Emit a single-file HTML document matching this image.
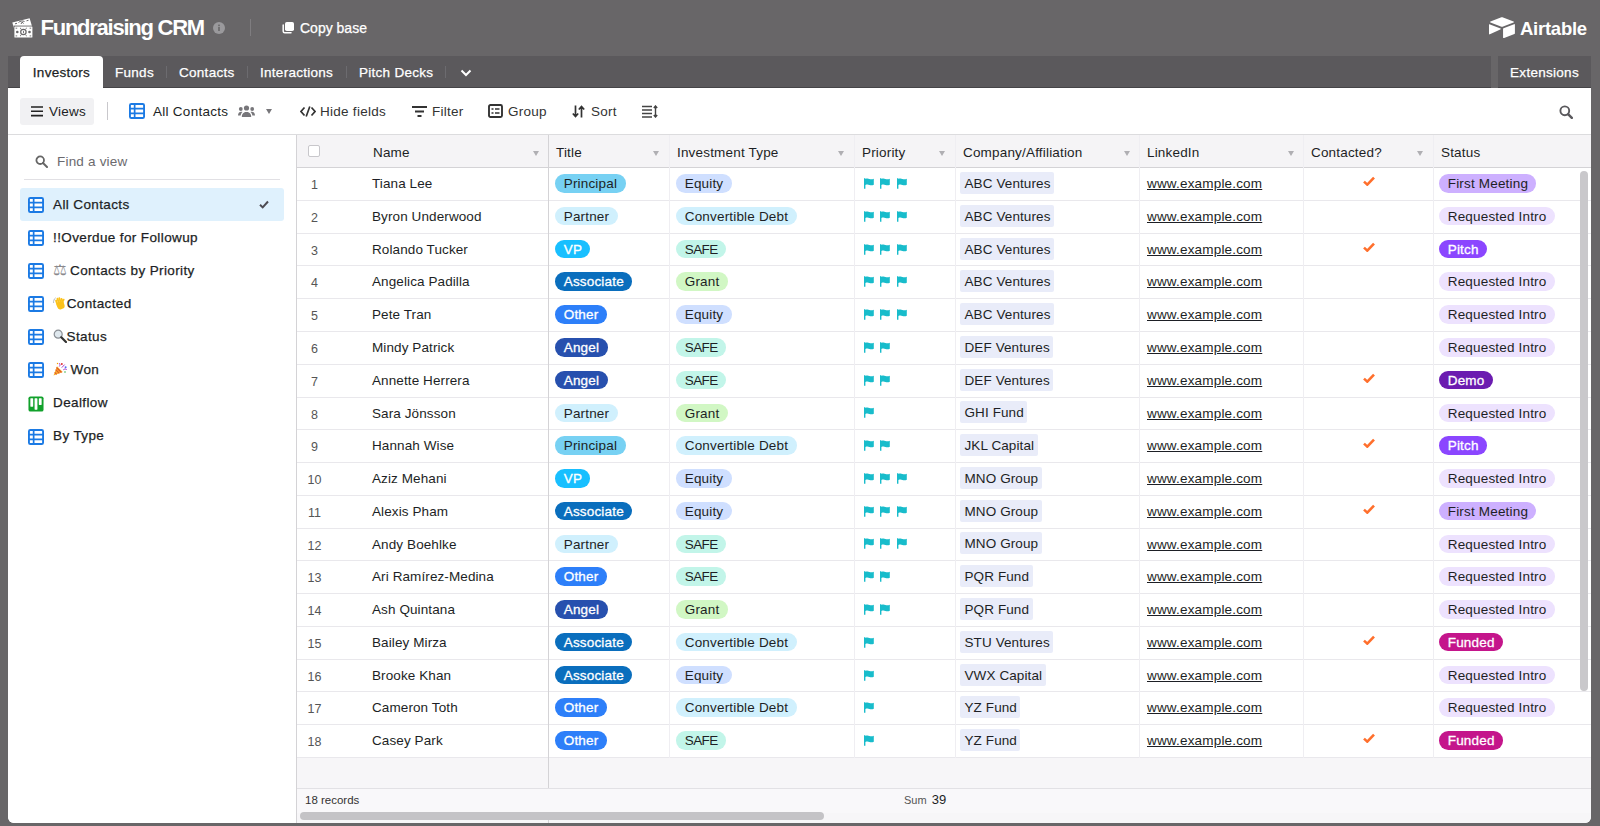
<!DOCTYPE html>
<html><head><meta charset="utf-8"><title>Fundraising CRM - Airtable</title>
<style>
*{box-sizing:border-box}
html,body{margin:0;padding:0}
body{width:1600px;height:826px;overflow:hidden;background:#686668;font-family:"Liberation Sans","DejaVu Sans",sans-serif;font-size:13px;color:#1d1f25;position:relative}
.abs{position:absolute}
#top{position:absolute;left:0;top:0;width:1600px;height:56px}
#title{position:absolute;left:40.5px;top:13.5px;font-size:22px;font-weight:bold;color:#fff;letter-spacing:-1.25px;line-height:28px;white-space:nowrap}
#copy{position:absolute;left:300px;top:18px;font-size:14px;color:#fff;line-height:20px;white-space:nowrap;-webkit-text-stroke:.25px #fff}
#logo-t{position:absolute;left:1520px;top:14.5px;font-size:18.5px;font-weight:bold;color:#fff;line-height:28px;letter-spacing:-0.25px;white-space:nowrap}
#tabs{position:absolute;left:8px;top:56px;width:1483px;height:32px;background:#5b595c;border-bottom:1px solid #454447}
#ext{position:absolute;left:1498px;top:56px;width:93px;height:32px;background:#5b595c;border-bottom:1px solid #454447;color:#fff;font-size:13.5px;line-height:34px;text-align:center;letter-spacing:.28px;-webkit-text-stroke:.25px #fff}
.tab{position:absolute;top:0;height:32px;line-height:33px;color:#fff;font-size:13.5px;letter-spacing:.28px;white-space:nowrap;-webkit-text-stroke:.25px currentColor}
.tab.act{background:#fff;color:#1d1f25;border-radius:4px 4px 0 0;left:12px;width:83px;text-align:center;height:33px}
.tsep{position:absolute;top:10px;width:1px;height:12px;background:#6c6b6f}
#panel{position:absolute;left:8px;top:88px;width:1583px;height:735px;background:#fff;border-radius:0 0 6px 6px;overflow:hidden}
#toolbar{position:absolute;left:0;top:0;width:1583px;height:47px;border-bottom:1px solid #dcdcde}
.tb{position:absolute;top:14px;line-height:20px;font-size:13.5px;letter-spacing:.27px;color:#333;white-space:nowrap}
#views{position:absolute;left:12px;top:10px;width:74px;height:27px;background:#f1f1f3;border-radius:3px}
#side{position:absolute;left:0;top:47px;width:288px;height:690px;background:#fff}
.sv{position:absolute;left:12px;width:264px;height:33px;line-height:33px;font-size:13.5px;letter-spacing:.38px;-webkit-text-stroke:.25px currentColor;color:#1d1f25;white-space:nowrap}
.sv .lb{position:absolute;left:33px;top:0}
.sv svg.gi{position:absolute;left:8px;top:9.200px}
.sv.act{background:#dff1fd;border-radius:3px}
#grid{position:absolute;left:288px;top:47px;width:1295px;height:690px;background:#f7f6f8;border-left:1px solid #d4d3d6}
#ghead{position:absolute;left:0;top:0;width:1295px;height:33px;background:#f5f4f6;border-bottom:1px solid #d4d3d6}
.h{position:absolute;top:0;height:32px;line-height:35px;font-size:13.5px;letter-spacing:.18px;color:#1d1f25;white-space:nowrap}
.harr{position:absolute;margin-left:.6px;top:15.5px;width:0;height:0;border-left:3.5px solid transparent;border-right:3.5px solid transparent;border-top:5px solid #b0afb3}
.vline{position:absolute;top:0;width:1px;background:#efeef2}
.row{position:absolute;left:289px;width:1294px;height:32.76px;border-bottom:1px solid #e9e8ec;background:#fff;white-space:nowrap}
.row span.num{position:absolute;left:0;width:35px;text-align:center;top:0;line-height:35px;font-size:12.5px;color:#555}
.row span.nm{position:absolute;left:75px;top:0;line-height:32px;font-size:13.5px;letter-spacing:.1px}
.c{position:absolute;top:0;height:32px;line-height:33px;font-size:13.5px;letter-spacing:.18px}
.c-title{left:259px}.c-inv{left:380px}.c-pri{left:567px}.c-comp{left:664px}.c-li{left:850px;line-height:32px}.c-ct{left:1066px}.c-st{left:1143px}
.pill{display:inline-block;height:18.5px;line-height:20.4px;border-radius:9.25px;padding:0 8.4px;font-size:13.5px;letter-spacing:.18px;vertical-align:middle;position:relative;top:-2.2px;left:-0.7px}
.chip{display:inline-block;height:22px;line-height:23px;border-radius:2px;padding:0 3.5px 0 4.5px;font-size:13.5px;letter-spacing:.1px;background:#e9ecf9;vertical-align:middle;position:relative;top:-2.5px;left:-1px}
.fl{margin-right:6.5px;vertical-align:middle;position:relative;top:-2px;left:-0.5px}
.ck{vertical-align:middle;position:relative;top:-4.5px}
svg.em{vertical-align:middle;position:relative;top:-1.5px;margin-right:1px}
.sc{font-family:'DejaVu Sans',sans-serif;font-size:15.5px;line-height:10px;color:#8a898d;margin-right:3.200px;-webkit-text-stroke:0;letter-spacing:0}
#foot{position:absolute;left:289px;top:700px;width:1294px;height:25px;background:#f9f8fa;border-top:1px solid #e2e1e5}
</style></head><body>
<div id="top">
 <svg class="abs" style="left:11.500px;top:17.500px" width="21" height="20" viewBox="0 0 21 20"><g><path d="M0.300 4.600L17.600 0.300L20.400 9.500L2.500 12z" fill="#fff"/><path d="M3 5.800l2-.5M6.500 4.500c1.500-1.500 4-2 6-1M14.500 2.800l2-.5M9 6l1.200-2 1.300 1.600" stroke="#686668" stroke-width="1" fill="none"/><rect x="1.600" y="7.600" width="19.400" height="12.400" fill="#686668"/><rect x="2.400" y="8.400" width="18" height="11.200" rx=".6" fill="#fff"/><circle cx="11.400" cy="14" r="3.300" fill="#686668"/><circle cx="11.400" cy="14" r="2.100" fill="#fff"/><rect x="11" y="12.800" width=".9" height="2.400" fill="#686668"/><circle cx="5.300" cy="14" r="1.300" fill="#686668"/><circle cx="17.500" cy="14" r="1.300" fill="#686668"/><path d="M3.600 10.200h1.600M17.600 10.200h1.600M3.600 17.900h1.600M17.600 17.900h1.600M8 10l1.200.8M14.800 10l-1.200.8M8 18l1.200-.8M14.800 18l-1.200-.8" stroke="#686668" stroke-width=".9"/></g></svg>
 <div id="title">Fundraising CRM</div>
 <svg class="abs" style="left:213px;top:21.700px" width="12" height="12" viewBox="0 0 12 12"><circle cx="6" cy="6" r="6" fill="#9a999c"/><rect x="5.200" y="5" width="1.6" height="4" fill="#686668"/><rect x="5.200" y="2.600" width="1.6" height="1.6" fill="#686668"/></svg>
 <div class="abs" style="left:250px;top:19px;width:1px;height:17px;background:#7f7d80"></div>
 <svg class="abs" style="left:281px;top:21px" width="14" height="14" viewBox="0 0 14 14"><rect x="4" y="1" width="9" height="9" rx="1.800" fill="#fff"/><path d="M2.200 4v6.300a1.500 1.500 0 0 0 1.500 1.500h6.300" fill="none" stroke="#fff" stroke-width="1.500" stroke-linecap="round"/></svg>
 <div id="copy">Copy base</div>
 <svg class="abs" style="left:1489.300px;top:16.600px" width="26" height="21.200" viewBox="0 0 27 22"><path d="M12.200 0.500 L1.500 4.700 c-.5.200-.5.900 0 1.100 l10.800 4.100 c.8.300 1.600.3 2.400 0 l10.800-4.100 c.5-.2.500-.9 0-1.100 L14.700 .5 c-.8-.3-1.700-.3-2.500 0z" fill="#fff"/><path d="M14.600 12.300v9c0 .5.500.8.900.6l10.900-4.200c.3-.1.500-.4.500-.7v-9c0-.5-.5-.8-.9-.6l-10.900 4.200c-.3.100-.5.400-.5.700z" fill="#fff"/><path d="M12.100 12.700 L8.900 14.200 L0.900 18 c-.4.200-.9-.1-.9-.6 V8.200 c0-.3.200-.5.400-.6.300-.1.500 0 .7.100 l10.900 4.300 c.4.200.5.600.1.700z" fill="#fff"/></svg>
 <div id="logo-t">Airtable</div>
</div>
<div id="tabs">
 <div class="tab act">Investors</div>
 <div class="tab" style="left:107px">Funds</div>
 <div class="tsep" style="left:158px"></div>
 <div class="tab" style="left:171px">Contacts</div>
 <div class="tsep" style="left:239px"></div>
 <div class="tab" style="left:252px">Interactions</div>
 <div class="tsep" style="left:338px"></div>
 <div class="tab" style="left:351px">Pitch Decks</div>
 <div class="tsep" style="left:437px"></div>
 <svg class="abs" style="left:452px;top:13px" width="12" height="8" viewBox="0 0 12 8"><path d="M1.500 1.500l4.500 4.500 4.500-4.500" fill="none" stroke="#fff" stroke-width="2"/></svg>
</div>
<div id="ext">Extensions</div>
<div id="panel">
 <div id="toolbar">
  <div id="views"></div>
  <svg class="abs" style="left:22.500px;top:18.300px" width="12" height="11" viewBox="0 0 12 11"><path d="M0 1h12M0 5.300h12M0 9.600h12" stroke="#222" stroke-width="1.600"/></svg>
  <div class="tb" style="left:41px;color:#1d1f25">Views</div>
  <div class="abs" style="left:99px;top:14px;width:1px;height:18px;background:#c9c8cc"></div>
  <svg class="abs" style="left:120.500px;top:15.200px" width="16" height="16" viewBox="0 0 17 17"><rect x="1" y="1" width="15" height="15" rx="1.500" fill="#fff" stroke="#1b7ae4" stroke-width="2"/><path d="M1 6h15M1 11h15M6 1v15" stroke="#1b7ae4" stroke-width="1.800"/></svg>
  <div class="tb" style="left:145px;color:#1d1f25">All Contacts</div>
  <svg class="abs" style="left:230px;top:17px" width="17" height="12" viewBox="0 0 17 12"><g fill="#77767a"><circle cx="8.500" cy="3" r="2.600"/><path d="M3.800 12c0-3.500 2-5 4.700-5s4.700 1.500 4.700 5z"/><circle cx="2.800" cy="4" r="1.900"/><circle cx="14.200" cy="4" r="1.900"/><path d="M0 10.500c0-2.500 1.200-3.800 3.200-3.800.5 0 1 .1 1.300.3-1.200 1-1.700 2.200-1.800 3.500z"/><path d="M17 10.500c0-2.500-1.200-3.800-3.200-3.800-.5 0-1 .1-1.300.3 1.200 1 1.700 2.200 1.800 3.500z"/></g></svg>
  <div class="abs" style="left:258px;top:21px;width:0;height:0;border-left:3.500px solid transparent;border-right:3.500px solid transparent;border-top:5px solid #77767a"></div>
  <svg class="abs" style="left:292px;top:18px" width="16" height="11" viewBox="0 0 16 11"><path d="M4.500 1.500L1 5.500l3.500 4M11.500 1.500L15 5.500l-3.500 4M9.800 0.500L6.200 10.500" fill="none" stroke="#333" stroke-width="1.700"/></svg>
  <div class="tb" style="left:312px">Hide fields</div>
  <svg class="abs" style="left:404px;top:18px" width="15" height="11" viewBox="0 0 15 11"><path d="M0 1h15M3 5.500h9M5.500 10h4" stroke="#333" stroke-width="1.800"/></svg>
  <div class="tb" style="left:424px">Filter</div>
  <svg class="abs" style="left:480px;top:16px" width="15" height="14" viewBox="0 0 15 14"><rect x="1" y="1" width="13" height="12" rx="1.500" fill="none" stroke="#333" stroke-width="1.900"/><path d="M3.500 5h2M7 5h4.500M3.500 9h2M7 9h4.500" stroke="#333" stroke-width="1.600"/></svg>
  <div class="tb" style="left:500px">Group</div>
  <svg class="abs" style="left:564px;top:17px" width="13" height="13" viewBox="0 0 13 13"><path d="M3.500 0.500v11M0.800 8.500l2.700 3 2.700-3M9.500 12.500v-11M6.800 4.500l2.700-3 2.700 3" fill="none" stroke="#333" stroke-width="1.700"/></svg>
  <div class="tb" style="left:583px">Sort</div>
  <svg class="abs" style="left:634px;top:17px" width="16" height="13" viewBox="0 0 16 13"><path d="M0 1.500h10M0 5h10M0 8.500h10M0 12h10" stroke="#444" stroke-width="1.400"/><path d="M13.500 1v11M11.800 3l1.700-2 1.700 2M11.800 10l1.700 2 1.700-2" fill="none" stroke="#444" stroke-width="1.400"/></svg>
  <svg class="abs" style="left:1550.500px;top:16.500px" width="14" height="14" viewBox="0 0 14 14"><circle cx="5.800" cy="5.800" r="4.400" fill="none" stroke="#5a595d" stroke-width="1.900"/><path d="M9.300 9.300l3.500 3.500" stroke="#5a595d" stroke-width="2.500" stroke-linecap="round"/></svg>
 </div>
 <div id="side">
  <svg class="abs" style="left:27px;top:20px" width="13" height="13" viewBox="0 0 13 13"><circle cx="5.200" cy="5.200" r="3.800" fill="none" stroke="#666" stroke-width="1.800"/><path d="M8 8l4 4" stroke="#666" stroke-width="2" stroke-linecap="round"/></svg>
  <div class="abs" style="left:49px;top:17px;line-height:20px;font-size:13.5px;letter-spacing:.2px;color:#6b6a6e">Find a view</div>
  <div class="abs" style="left:16px;top:44px;width:256px;height:1px;background:#e1e0e4"></div>
  <div class="sv act" style="top:52.50px"><svg class="gi" width="16" height="16" viewBox="0 0 17 17"><rect x="1" y="1" width="15" height="15" rx="1.500" fill="#fff" stroke="#1b7ae4" stroke-width="2"/><path d="M1 6h15M1 11h15M6 1v15" stroke="#1b7ae4" stroke-width="1.800"/></svg><span class="lb">All Contacts</span><svg class="abs" style="left:239px;top:12px" width="10" height="9" viewBox="0 0 10 9"><path d="M1 4.800l2.700 2.600L9 1.500" fill="none" stroke="#4d4b52" stroke-width="2"/></svg></div>
<div class="sv" style="top:85.64px"><svg class="gi" width="16" height="16" viewBox="0 0 17 17"><rect x="1" y="1" width="15" height="15" rx="1.500" fill="#fff" stroke="#1b7ae4" stroke-width="2"/><path d="M1 6h15M1 11h15M6 1v15" stroke="#1b7ae4" stroke-width="1.800"/></svg><span class="lb">!!Overdue for Followup</span></div>
<div class="sv" style="top:118.78px"><svg class="gi" width="16" height="16" viewBox="0 0 17 17"><rect x="1" y="1" width="15" height="15" rx="1.500" fill="#fff" stroke="#1b7ae4" stroke-width="2"/><path d="M1 6h15M1 11h15M6 1v15" stroke="#1b7ae4" stroke-width="1.800"/></svg><span class="lb"><span class="sc">&#9878;</span>Contacts by Priority</span></div>
<div class="sv" style="top:151.92px"><svg class="gi" width="16" height="16" viewBox="0 0 17 17"><rect x="1" y="1" width="15" height="15" rx="1.500" fill="#fff" stroke="#1b7ae4" stroke-width="2"/><path d="M1 6h15M1 11h15M6 1v15" stroke="#1b7ae4" stroke-width="1.800"/></svg><span class="lb"><svg class="em" style="margin-right:.2px;margin-left:-.5px" width="14" height="14" viewBox="0 0 14 14"><g transform="rotate(-18 7 8)" fill="#fcc21b"><rect x="3.400" y="5.500" width="7.600" height="7.800" rx="3.200"/><rect x="3.400" y="2.600" width="1.900" height="6" rx=".95"/><rect x="5.300" y="1.200" width="1.900" height="7" rx=".95"/><rect x="7.200" y="1.400" width="1.900" height="7" rx=".95"/><rect x="9.100" y="2.800" width="1.900" height="6" rx=".95"/><rect x="9.800" y="5.600" width="3.800" height="2" rx="1" transform="rotate(-40 10 7)"/></g><path d="M0.800 4.500c.2-1.200.9-2.100 1.900-2.700M0.600 7c-.3-1 .0-2 .4-2.600" stroke="#9aa0a6" stroke-width=".7" fill="none"/></svg>Contacted</span></div>
<div class="sv" style="top:185.06px"><svg class="gi" width="16" height="16" viewBox="0 0 17 17"><rect x="1" y="1" width="15" height="15" rx="1.500" fill="#fff" stroke="#1b7ae4" stroke-width="2"/><path d="M1 6h15M1 11h15M6 1v15" stroke="#1b7ae4" stroke-width="1.800"/></svg><span class="lb"><svg class="em" style="margin-right:0;margin-left:-.5px" width="14" height="14" viewBox="0 0 14 14"><circle cx="5.200" cy="5.200" r="4" fill="#dfe8ee" stroke="#8a8f95" stroke-width="1.200"/><path d="M8.300 8.300L13 13" stroke="#333" stroke-width="2.200" stroke-linecap="round"/></svg>Status</span></div>
<div class="sv" style="top:218.20px"><svg class="gi" width="16" height="16" viewBox="0 0 17 17"><rect x="1" y="1" width="15" height="15" rx="1.500" fill="#fff" stroke="#1b7ae4" stroke-width="2"/><path d="M1 6h15M1 11h15M6 1v15" stroke="#1b7ae4" stroke-width="1.800"/></svg><span class="lb"><svg class="em" style="margin-right:3.500px" width="14" height="14" viewBox="0 0 14 14"><path d="M0.500 13.500L4 4.200 9.800 10z" fill="#f7b32b"/><path d="M2.700 7.700l3.600 3.600M1.700 10.300l2 2M3.500 5.500l5 5" stroke="#e2542c" stroke-width="1.100"/><circle cx="8.800" cy="2" r="1" fill="#e03131"/><circle cx="12.600" cy="5.200" r="1" fill="#4c6ef5"/><circle cx="12" cy="10" r=".8" fill="#37b24d"/><path d="M6.300 4.500c1-1 .8-2.600-.3-3.500M10.300 7.800c1-1 2.500-1 3.500-.2M8.800 5.600l2.800-3" stroke="#ae3ec9" stroke-width="1" fill="none"/><circle cx="4.500" cy="1.500" r=".7" fill="#f59f00"/></svg>Won</span></div>
<div class="sv" style="top:251.34px"><svg class="gi" width="16" height="16" viewBox="0 0 17 17"><rect x="0.500" y="0.500" width="16" height="16" rx="2" fill="#11a12b"/><rect x="2.500" y="2.500" width="3" height="9" rx=".5" fill="#fff"/><rect x="7" y="2.500" width="3" height="12" rx=".5" fill="#fff"/><rect x="11.500" y="2.500" width="3" height="7" rx=".5" fill="#fff"/></svg><span class="lb">Dealflow</span></div>
<div class="sv" style="top:284.48px"><svg class="gi" width="16" height="16" viewBox="0 0 17 17"><rect x="1" y="1" width="15" height="15" rx="1.500" fill="#fff" stroke="#1b7ae4" stroke-width="2"/><path d="M1 6h15M1 11h15M6 1v15" stroke="#1b7ae4" stroke-width="1.800"/></svg><span class="lb">By Type</span></div>
 </div>
 <div id="grid">
  <div id="ghead">
   <div class="abs" style="left:11px;top:10px;width:12px;height:12px;border:1px solid #c8c7cb;border-radius:2px;background:#fff"></div>
   <div class="h" style="left:76px">Name</div><div class="harr" style="left:235px"></div>
   <div class="h" style="left:259px">Title</div><div class="harr" style="left:355px"></div>
   <div class="h" style="left:380px">Investment Type</div><div class="harr" style="left:540px"></div>
   <div class="h" style="left:565px">Priority</div><div class="harr" style="left:641px"></div>
   <div class="h" style="left:666px">Company/Affiliation</div><div class="harr" style="left:826px"></div>
   <div class="h" style="left:850px">LinkedIn</div><div class="harr" style="left:990px"></div>
   <div class="h" style="left:1014px">Contacted?</div><div class="harr" style="left:1119px"></div>
   <div class="h" style="left:1144px">Status</div>
  </div>
 </div>
 <div class="row" style="top:80.20px"><span class="num">1</span><span class="nm">Tiana Lee</span><span class="c c-title"><span class="pill" style="background:#77d1f3;color:#1d1f25">Principal</span></span><span class="c c-inv"><span class="pill" style="background:#cfdfff;color:#1d1f25">Equity</span></span><span class="c c-pri"><svg class="fl" viewBox="0 0 10 11" width="10" height="11"><path d="M0 0.3h1.4v10.4h-1.4z M1.4 0.9c1.6-.7 2.7-.5 4 0s2.6.6 4.4-.1v6c-1.8.8-3.1.6-4.4.1s-2.400-.7-4 0z" fill="#18bccb"/></svg><svg class="fl" viewBox="0 0 10 11" width="10" height="11"><path d="M0 0.3h1.4v10.4h-1.4z M1.4 0.9c1.6-.7 2.7-.5 4 0s2.6.6 4.4-.1v6c-1.8.8-3.1.6-4.4.1s-2.400-.7-4 0z" fill="#18bccb"/></svg><svg class="fl" viewBox="0 0 10 11" width="10" height="11"><path d="M0 0.3h1.4v10.4h-1.4z M1.4 0.9c1.6-.7 2.7-.5 4 0s2.6.6 4.4-.1v6c-1.8.8-3.1.6-4.4.1s-2.400-.7-4 0z" fill="#18bccb"/></svg></span><span class="c c-comp"><span class="chip">ABC Ventures</span></span><span class="c c-li"><u>www.example.com</u></span><span class="c c-ct"><svg class="ck" viewBox="0 0 12 10" width="12" height="10"><path d="M1 5.6 L4.3 8.6 L11 1.6" fill="none" stroke="#ff6f2c" stroke-width="2.6" stroke-linejoin="miter"/></svg></span><span class="c c-st"><span class="pill" style="background:#cdb0ff;color:#1d1f25">First Meeting</span></span></div>
<div class="row" style="top:112.96px"><span class="num">2</span><span class="nm">Byron Underwood</span><span class="c c-title"><span class="pill" style="background:#d0f0fd;color:#1d1f25">Partner</span></span><span class="c c-inv"><span class="pill" style="background:#d0f0fd;color:#1d1f25">Convertible Debt</span></span><span class="c c-pri"><svg class="fl" viewBox="0 0 10 11" width="10" height="11"><path d="M0 0.3h1.4v10.4h-1.4z M1.4 0.9c1.6-.7 2.7-.5 4 0s2.6.6 4.4-.1v6c-1.8.8-3.1.6-4.4.1s-2.400-.7-4 0z" fill="#18bccb"/></svg><svg class="fl" viewBox="0 0 10 11" width="10" height="11"><path d="M0 0.3h1.4v10.4h-1.4z M1.4 0.9c1.6-.7 2.7-.5 4 0s2.6.6 4.4-.1v6c-1.8.8-3.1.6-4.4.1s-2.400-.7-4 0z" fill="#18bccb"/></svg><svg class="fl" viewBox="0 0 10 11" width="10" height="11"><path d="M0 0.3h1.4v10.4h-1.4z M1.4 0.9c1.6-.7 2.7-.5 4 0s2.6.6 4.4-.1v6c-1.8.8-3.1.6-4.4.1s-2.400-.7-4 0z" fill="#18bccb"/></svg></span><span class="c c-comp"><span class="chip">ABC Ventures</span></span><span class="c c-li"><u>www.example.com</u></span><span class="c c-ct"></span><span class="c c-st"><span class="pill" style="background:#ede2fe;color:#1d1f25">Requested Intro</span></span></div>
<div class="row" style="top:145.72px"><span class="num">3</span><span class="nm">Rolando Tucker</span><span class="c c-title"><span class="pill" style="background:#18bfff;color:#fff;-webkit-text-stroke:.3px #fff">VP</span></span><span class="c c-inv"><span class="pill" style="background:#c2f5e9;color:#1d1f25;letter-spacing:-.55px">SAFE</span></span><span class="c c-pri"><svg class="fl" viewBox="0 0 10 11" width="10" height="11"><path d="M0 0.3h1.4v10.4h-1.4z M1.4 0.9c1.6-.7 2.7-.5 4 0s2.6.6 4.4-.1v6c-1.8.8-3.1.6-4.4.1s-2.400-.7-4 0z" fill="#18bccb"/></svg><svg class="fl" viewBox="0 0 10 11" width="10" height="11"><path d="M0 0.3h1.4v10.4h-1.4z M1.4 0.9c1.6-.7 2.7-.5 4 0s2.6.6 4.4-.1v6c-1.8.8-3.1.6-4.4.1s-2.400-.7-4 0z" fill="#18bccb"/></svg><svg class="fl" viewBox="0 0 10 11" width="10" height="11"><path d="M0 0.3h1.4v10.4h-1.4z M1.4 0.9c1.6-.7 2.7-.5 4 0s2.6.6 4.4-.1v6c-1.8.8-3.1.6-4.4.1s-2.400-.7-4 0z" fill="#18bccb"/></svg></span><span class="c c-comp"><span class="chip">ABC Ventures</span></span><span class="c c-li"><u>www.example.com</u></span><span class="c c-ct"><svg class="ck" viewBox="0 0 12 10" width="12" height="10"><path d="M1 5.6 L4.3 8.6 L11 1.6" fill="none" stroke="#ff6f2c" stroke-width="2.6" stroke-linejoin="miter"/></svg></span><span class="c c-st"><span class="pill" style="background:#8b46ff;color:#fff;-webkit-text-stroke:.3px #fff">Pitch</span></span></div>
<div class="row" style="top:178.48px"><span class="num">4</span><span class="nm">Angelica Padilla</span><span class="c c-title"><span class="pill" style="background:#0a6ebd;color:#fff;-webkit-text-stroke:.3px #fff">Associate</span></span><span class="c c-inv"><span class="pill" style="background:#d1f7c4;color:#1d1f25">Grant</span></span><span class="c c-pri"><svg class="fl" viewBox="0 0 10 11" width="10" height="11"><path d="M0 0.3h1.4v10.4h-1.4z M1.4 0.9c1.6-.7 2.7-.5 4 0s2.6.6 4.4-.1v6c-1.8.8-3.1.6-4.4.1s-2.400-.7-4 0z" fill="#18bccb"/></svg><svg class="fl" viewBox="0 0 10 11" width="10" height="11"><path d="M0 0.3h1.4v10.4h-1.4z M1.4 0.9c1.6-.7 2.7-.5 4 0s2.6.6 4.4-.1v6c-1.8.8-3.1.6-4.4.1s-2.400-.7-4 0z" fill="#18bccb"/></svg><svg class="fl" viewBox="0 0 10 11" width="10" height="11"><path d="M0 0.3h1.4v10.4h-1.4z M1.4 0.9c1.6-.7 2.7-.5 4 0s2.6.6 4.4-.1v6c-1.8.8-3.1.6-4.4.1s-2.400-.7-4 0z" fill="#18bccb"/></svg></span><span class="c c-comp"><span class="chip">ABC Ventures</span></span><span class="c c-li"><u>www.example.com</u></span><span class="c c-ct"></span><span class="c c-st"><span class="pill" style="background:#ede2fe;color:#1d1f25">Requested Intro</span></span></div>
<div class="row" style="top:211.24px"><span class="num">5</span><span class="nm">Pete Tran</span><span class="c c-title"><span class="pill" style="background:#2d7ff9;color:#fff;-webkit-text-stroke:.3px #fff">Other</span></span><span class="c c-inv"><span class="pill" style="background:#cfdfff;color:#1d1f25">Equity</span></span><span class="c c-pri"><svg class="fl" viewBox="0 0 10 11" width="10" height="11"><path d="M0 0.3h1.4v10.4h-1.4z M1.4 0.9c1.6-.7 2.7-.5 4 0s2.6.6 4.4-.1v6c-1.8.8-3.1.6-4.4.1s-2.400-.7-4 0z" fill="#18bccb"/></svg><svg class="fl" viewBox="0 0 10 11" width="10" height="11"><path d="M0 0.3h1.4v10.4h-1.4z M1.4 0.9c1.6-.7 2.7-.5 4 0s2.6.6 4.4-.1v6c-1.8.8-3.1.6-4.4.1s-2.400-.7-4 0z" fill="#18bccb"/></svg><svg class="fl" viewBox="0 0 10 11" width="10" height="11"><path d="M0 0.3h1.4v10.4h-1.4z M1.4 0.9c1.6-.7 2.7-.5 4 0s2.6.6 4.4-.1v6c-1.8.8-3.1.6-4.4.1s-2.400-.7-4 0z" fill="#18bccb"/></svg></span><span class="c c-comp"><span class="chip">ABC Ventures</span></span><span class="c c-li"><u>www.example.com</u></span><span class="c c-ct"></span><span class="c c-st"><span class="pill" style="background:#ede2fe;color:#1d1f25">Requested Intro</span></span></div>
<div class="row" style="top:244.00px"><span class="num">6</span><span class="nm">Mindy Patrick</span><span class="c c-title"><span class="pill" style="background:#2750ae;color:#fff;-webkit-text-stroke:.3px #fff">Angel</span></span><span class="c c-inv"><span class="pill" style="background:#c2f5e9;color:#1d1f25;letter-spacing:-.55px">SAFE</span></span><span class="c c-pri"><svg class="fl" viewBox="0 0 10 11" width="10" height="11"><path d="M0 0.3h1.4v10.4h-1.4z M1.4 0.9c1.6-.7 2.7-.5 4 0s2.6.6 4.4-.1v6c-1.8.8-3.1.6-4.4.1s-2.400-.7-4 0z" fill="#18bccb"/></svg><svg class="fl" viewBox="0 0 10 11" width="10" height="11"><path d="M0 0.3h1.4v10.4h-1.4z M1.4 0.9c1.6-.7 2.7-.5 4 0s2.6.6 4.4-.1v6c-1.8.8-3.1.6-4.4.1s-2.400-.7-4 0z" fill="#18bccb"/></svg></span><span class="c c-comp"><span class="chip">DEF Ventures</span></span><span class="c c-li"><u>www.example.com</u></span><span class="c c-ct"></span><span class="c c-st"><span class="pill" style="background:#ede2fe;color:#1d1f25">Requested Intro</span></span></div>
<div class="row" style="top:276.76px"><span class="num">7</span><span class="nm">Annette Herrera</span><span class="c c-title"><span class="pill" style="background:#2750ae;color:#fff;-webkit-text-stroke:.3px #fff">Angel</span></span><span class="c c-inv"><span class="pill" style="background:#c2f5e9;color:#1d1f25;letter-spacing:-.55px">SAFE</span></span><span class="c c-pri"><svg class="fl" viewBox="0 0 10 11" width="10" height="11"><path d="M0 0.3h1.4v10.4h-1.4z M1.4 0.9c1.6-.7 2.7-.5 4 0s2.6.6 4.4-.1v6c-1.8.8-3.1.6-4.4.1s-2.400-.7-4 0z" fill="#18bccb"/></svg><svg class="fl" viewBox="0 0 10 11" width="10" height="11"><path d="M0 0.3h1.4v10.4h-1.4z M1.4 0.9c1.6-.7 2.7-.5 4 0s2.6.6 4.4-.1v6c-1.8.8-3.1.6-4.4.1s-2.400-.7-4 0z" fill="#18bccb"/></svg></span><span class="c c-comp"><span class="chip">DEF Ventures</span></span><span class="c c-li"><u>www.example.com</u></span><span class="c c-ct"><svg class="ck" viewBox="0 0 12 10" width="12" height="10"><path d="M1 5.6 L4.3 8.6 L11 1.6" fill="none" stroke="#ff6f2c" stroke-width="2.6" stroke-linejoin="miter"/></svg></span><span class="c c-st"><span class="pill" style="background:#6b1cb0;color:#fff;-webkit-text-stroke:.3px #fff">Demo</span></span></div>
<div class="row" style="top:309.52px"><span class="num">8</span><span class="nm">Sara Jönsson</span><span class="c c-title"><span class="pill" style="background:#d0f0fd;color:#1d1f25">Partner</span></span><span class="c c-inv"><span class="pill" style="background:#d1f7c4;color:#1d1f25">Grant</span></span><span class="c c-pri"><svg class="fl" viewBox="0 0 10 11" width="10" height="11"><path d="M0 0.3h1.4v10.4h-1.4z M1.4 0.9c1.6-.7 2.7-.5 4 0s2.6.6 4.4-.1v6c-1.8.8-3.1.6-4.4.1s-2.400-.7-4 0z" fill="#18bccb"/></svg></span><span class="c c-comp"><span class="chip">GHI Fund</span></span><span class="c c-li"><u>www.example.com</u></span><span class="c c-ct"></span><span class="c c-st"><span class="pill" style="background:#ede2fe;color:#1d1f25">Requested Intro</span></span></div>
<div class="row" style="top:342.28px"><span class="num">9</span><span class="nm">Hannah Wise</span><span class="c c-title"><span class="pill" style="background:#77d1f3;color:#1d1f25">Principal</span></span><span class="c c-inv"><span class="pill" style="background:#d0f0fd;color:#1d1f25">Convertible Debt</span></span><span class="c c-pri"><svg class="fl" viewBox="0 0 10 11" width="10" height="11"><path d="M0 0.3h1.4v10.4h-1.4z M1.4 0.9c1.6-.7 2.7-.5 4 0s2.6.6 4.4-.1v6c-1.8.8-3.1.6-4.4.1s-2.400-.7-4 0z" fill="#18bccb"/></svg><svg class="fl" viewBox="0 0 10 11" width="10" height="11"><path d="M0 0.3h1.4v10.4h-1.4z M1.4 0.9c1.6-.7 2.7-.5 4 0s2.6.6 4.4-.1v6c-1.8.8-3.1.6-4.4.1s-2.400-.7-4 0z" fill="#18bccb"/></svg></span><span class="c c-comp"><span class="chip">JKL Capital</span></span><span class="c c-li"><u>www.example.com</u></span><span class="c c-ct"><svg class="ck" viewBox="0 0 12 10" width="12" height="10"><path d="M1 5.6 L4.3 8.6 L11 1.6" fill="none" stroke="#ff6f2c" stroke-width="2.6" stroke-linejoin="miter"/></svg></span><span class="c c-st"><span class="pill" style="background:#8b46ff;color:#fff;-webkit-text-stroke:.3px #fff">Pitch</span></span></div>
<div class="row" style="top:375.04px"><span class="num">10</span><span class="nm">Aziz Mehani</span><span class="c c-title"><span class="pill" style="background:#18bfff;color:#fff;-webkit-text-stroke:.3px #fff">VP</span></span><span class="c c-inv"><span class="pill" style="background:#cfdfff;color:#1d1f25">Equity</span></span><span class="c c-pri"><svg class="fl" viewBox="0 0 10 11" width="10" height="11"><path d="M0 0.3h1.4v10.4h-1.4z M1.4 0.9c1.6-.7 2.7-.5 4 0s2.6.6 4.4-.1v6c-1.8.8-3.1.6-4.4.1s-2.400-.7-4 0z" fill="#18bccb"/></svg><svg class="fl" viewBox="0 0 10 11" width="10" height="11"><path d="M0 0.3h1.4v10.4h-1.4z M1.4 0.9c1.6-.7 2.7-.5 4 0s2.6.6 4.4-.1v6c-1.8.8-3.1.6-4.4.1s-2.400-.7-4 0z" fill="#18bccb"/></svg><svg class="fl" viewBox="0 0 10 11" width="10" height="11"><path d="M0 0.3h1.4v10.4h-1.4z M1.4 0.9c1.6-.7 2.7-.5 4 0s2.6.6 4.4-.1v6c-1.8.8-3.1.6-4.4.1s-2.400-.7-4 0z" fill="#18bccb"/></svg></span><span class="c c-comp"><span class="chip">MNO Group</span></span><span class="c c-li"><u>www.example.com</u></span><span class="c c-ct"></span><span class="c c-st"><span class="pill" style="background:#ede2fe;color:#1d1f25">Requested Intro</span></span></div>
<div class="row" style="top:407.80px"><span class="num">11</span><span class="nm">Alexis Pham</span><span class="c c-title"><span class="pill" style="background:#0a6ebd;color:#fff;-webkit-text-stroke:.3px #fff">Associate</span></span><span class="c c-inv"><span class="pill" style="background:#cfdfff;color:#1d1f25">Equity</span></span><span class="c c-pri"><svg class="fl" viewBox="0 0 10 11" width="10" height="11"><path d="M0 0.3h1.4v10.4h-1.4z M1.4 0.9c1.6-.7 2.7-.5 4 0s2.6.6 4.4-.1v6c-1.8.8-3.1.6-4.4.1s-2.400-.7-4 0z" fill="#18bccb"/></svg><svg class="fl" viewBox="0 0 10 11" width="10" height="11"><path d="M0 0.3h1.4v10.4h-1.4z M1.4 0.9c1.6-.7 2.7-.5 4 0s2.6.6 4.4-.1v6c-1.8.8-3.1.6-4.4.1s-2.400-.7-4 0z" fill="#18bccb"/></svg><svg class="fl" viewBox="0 0 10 11" width="10" height="11"><path d="M0 0.3h1.4v10.4h-1.4z M1.4 0.9c1.6-.7 2.7-.5 4 0s2.6.6 4.4-.1v6c-1.8.8-3.1.6-4.4.1s-2.400-.7-4 0z" fill="#18bccb"/></svg></span><span class="c c-comp"><span class="chip">MNO Group</span></span><span class="c c-li"><u>www.example.com</u></span><span class="c c-ct"><svg class="ck" viewBox="0 0 12 10" width="12" height="10"><path d="M1 5.6 L4.3 8.6 L11 1.6" fill="none" stroke="#ff6f2c" stroke-width="2.6" stroke-linejoin="miter"/></svg></span><span class="c c-st"><span class="pill" style="background:#cdb0ff;color:#1d1f25">First Meeting</span></span></div>
<div class="row" style="top:440.56px"><span class="num">12</span><span class="nm">Andy Boehlke</span><span class="c c-title"><span class="pill" style="background:#d0f0fd;color:#1d1f25">Partner</span></span><span class="c c-inv"><span class="pill" style="background:#c2f5e9;color:#1d1f25;letter-spacing:-.55px">SAFE</span></span><span class="c c-pri"><svg class="fl" viewBox="0 0 10 11" width="10" height="11"><path d="M0 0.3h1.4v10.4h-1.4z M1.4 0.9c1.6-.7 2.7-.5 4 0s2.6.6 4.4-.1v6c-1.8.8-3.1.6-4.4.1s-2.400-.7-4 0z" fill="#18bccb"/></svg><svg class="fl" viewBox="0 0 10 11" width="10" height="11"><path d="M0 0.3h1.4v10.4h-1.4z M1.4 0.9c1.6-.7 2.7-.5 4 0s2.6.6 4.4-.1v6c-1.8.8-3.1.6-4.4.1s-2.400-.7-4 0z" fill="#18bccb"/></svg><svg class="fl" viewBox="0 0 10 11" width="10" height="11"><path d="M0 0.3h1.4v10.4h-1.4z M1.4 0.9c1.6-.7 2.7-.5 4 0s2.6.6 4.4-.1v6c-1.8.8-3.1.6-4.4.1s-2.400-.7-4 0z" fill="#18bccb"/></svg></span><span class="c c-comp"><span class="chip">MNO Group</span></span><span class="c c-li"><u>www.example.com</u></span><span class="c c-ct"></span><span class="c c-st"><span class="pill" style="background:#ede2fe;color:#1d1f25">Requested Intro</span></span></div>
<div class="row" style="top:473.32px"><span class="num">13</span><span class="nm">Ari Ramírez-Medina</span><span class="c c-title"><span class="pill" style="background:#2d7ff9;color:#fff;-webkit-text-stroke:.3px #fff">Other</span></span><span class="c c-inv"><span class="pill" style="background:#c2f5e9;color:#1d1f25;letter-spacing:-.55px">SAFE</span></span><span class="c c-pri"><svg class="fl" viewBox="0 0 10 11" width="10" height="11"><path d="M0 0.3h1.4v10.4h-1.4z M1.4 0.9c1.6-.7 2.7-.5 4 0s2.6.6 4.4-.1v6c-1.8.8-3.1.6-4.4.1s-2.400-.7-4 0z" fill="#18bccb"/></svg><svg class="fl" viewBox="0 0 10 11" width="10" height="11"><path d="M0 0.3h1.4v10.4h-1.4z M1.4 0.9c1.6-.7 2.7-.5 4 0s2.6.6 4.4-.1v6c-1.8.8-3.1.6-4.4.1s-2.400-.7-4 0z" fill="#18bccb"/></svg></span><span class="c c-comp"><span class="chip">PQR Fund</span></span><span class="c c-li"><u>www.example.com</u></span><span class="c c-ct"></span><span class="c c-st"><span class="pill" style="background:#ede2fe;color:#1d1f25">Requested Intro</span></span></div>
<div class="row" style="top:506.08px"><span class="num">14</span><span class="nm">Ash Quintana</span><span class="c c-title"><span class="pill" style="background:#2750ae;color:#fff;-webkit-text-stroke:.3px #fff">Angel</span></span><span class="c c-inv"><span class="pill" style="background:#d1f7c4;color:#1d1f25">Grant</span></span><span class="c c-pri"><svg class="fl" viewBox="0 0 10 11" width="10" height="11"><path d="M0 0.3h1.4v10.4h-1.4z M1.4 0.9c1.6-.7 2.7-.5 4 0s2.6.6 4.4-.1v6c-1.8.8-3.1.6-4.4.1s-2.400-.7-4 0z" fill="#18bccb"/></svg><svg class="fl" viewBox="0 0 10 11" width="10" height="11"><path d="M0 0.3h1.4v10.4h-1.4z M1.4 0.9c1.6-.7 2.7-.5 4 0s2.6.6 4.4-.1v6c-1.8.8-3.1.6-4.4.1s-2.400-.7-4 0z" fill="#18bccb"/></svg></span><span class="c c-comp"><span class="chip">PQR Fund</span></span><span class="c c-li"><u>www.example.com</u></span><span class="c c-ct"></span><span class="c c-st"><span class="pill" style="background:#ede2fe;color:#1d1f25">Requested Intro</span></span></div>
<div class="row" style="top:538.84px"><span class="num">15</span><span class="nm">Bailey Mirza</span><span class="c c-title"><span class="pill" style="background:#0a6ebd;color:#fff;-webkit-text-stroke:.3px #fff">Associate</span></span><span class="c c-inv"><span class="pill" style="background:#d0f0fd;color:#1d1f25">Convertible Debt</span></span><span class="c c-pri"><svg class="fl" viewBox="0 0 10 11" width="10" height="11"><path d="M0 0.3h1.4v10.4h-1.4z M1.4 0.9c1.6-.7 2.7-.5 4 0s2.6.6 4.4-.1v6c-1.8.8-3.1.6-4.4.1s-2.400-.7-4 0z" fill="#18bccb"/></svg></span><span class="c c-comp"><span class="chip">STU Ventures</span></span><span class="c c-li"><u>www.example.com</u></span><span class="c c-ct"><svg class="ck" viewBox="0 0 12 10" width="12" height="10"><path d="M1 5.6 L4.3 8.6 L11 1.6" fill="none" stroke="#ff6f2c" stroke-width="2.6" stroke-linejoin="miter"/></svg></span><span class="c c-st"><span class="pill" style="background:#c4158b;color:#fff;-webkit-text-stroke:.3px #fff">Funded</span></span></div>
<div class="row" style="top:571.60px"><span class="num">16</span><span class="nm">Brooke Khan</span><span class="c c-title"><span class="pill" style="background:#0a6ebd;color:#fff;-webkit-text-stroke:.3px #fff">Associate</span></span><span class="c c-inv"><span class="pill" style="background:#cfdfff;color:#1d1f25">Equity</span></span><span class="c c-pri"><svg class="fl" viewBox="0 0 10 11" width="10" height="11"><path d="M0 0.3h1.4v10.4h-1.4z M1.4 0.9c1.6-.7 2.7-.5 4 0s2.6.6 4.4-.1v6c-1.8.8-3.1.6-4.4.1s-2.400-.7-4 0z" fill="#18bccb"/></svg></span><span class="c c-comp"><span class="chip">VWX Capital</span></span><span class="c c-li"><u>www.example.com</u></span><span class="c c-ct"></span><span class="c c-st"><span class="pill" style="background:#ede2fe;color:#1d1f25">Requested Intro</span></span></div>
<div class="row" style="top:604.36px"><span class="num">17</span><span class="nm">Cameron Toth</span><span class="c c-title"><span class="pill" style="background:#2d7ff9;color:#fff;-webkit-text-stroke:.3px #fff">Other</span></span><span class="c c-inv"><span class="pill" style="background:#d0f0fd;color:#1d1f25">Convertible Debt</span></span><span class="c c-pri"><svg class="fl" viewBox="0 0 10 11" width="10" height="11"><path d="M0 0.3h1.4v10.4h-1.4z M1.4 0.9c1.6-.7 2.7-.5 4 0s2.6.6 4.4-.1v6c-1.8.8-3.1.6-4.4.1s-2.400-.7-4 0z" fill="#18bccb"/></svg></span><span class="c c-comp"><span class="chip">YZ Fund</span></span><span class="c c-li"><u>www.example.com</u></span><span class="c c-ct"></span><span class="c c-st"><span class="pill" style="background:#ede2fe;color:#1d1f25">Requested Intro</span></span></div>
<div class="row" style="top:637.12px"><span class="num">18</span><span class="nm">Casey Park</span><span class="c c-title"><span class="pill" style="background:#2d7ff9;color:#fff;-webkit-text-stroke:.3px #fff">Other</span></span><span class="c c-inv"><span class="pill" style="background:#c2f5e9;color:#1d1f25;letter-spacing:-.55px">SAFE</span></span><span class="c c-pri"><svg class="fl" viewBox="0 0 10 11" width="10" height="11"><path d="M0 0.3h1.4v10.4h-1.4z M1.4 0.9c1.6-.7 2.7-.5 4 0s2.6.6 4.4-.1v6c-1.8.8-3.1.6-4.4.1s-2.400-.7-4 0z" fill="#18bccb"/></svg></span><span class="c c-comp"><span class="chip">YZ Fund</span></span><span class="c c-li"><u>www.example.com</u></span><span class="c c-ct"><svg class="ck" viewBox="0 0 12 10" width="12" height="10"><path d="M1 5.6 L4.3 8.6 L11 1.6" fill="none" stroke="#ff6f2c" stroke-width="2.6" stroke-linejoin="miter"/></svg></span><span class="c c-st"><span class="pill" style="background:#c4158b;color:#fff;-webkit-text-stroke:.3px #fff">Funded</span></span></div>
 <div class="vline" style="left:540px;top:47px;height:690px;background:#d4d3d6"></div>
 <div class="vline" style="left:661px;top:47px;height:623px"></div>
 <div class="vline" style="left:846px;top:47px;height:623px"></div>
 <div class="vline" style="left:947px;top:47px;height:623px"></div>
 <div class="vline" style="left:1131px;top:47px;height:623px"></div>
 <div class="vline" style="left:1295px;top:47px;height:623px"></div>
 <div class="vline" style="left:1425px;top:47px;height:623px"></div>
 <div id="foot">
  <div class="abs" style="left:8px;top:0;line-height:22px;font-size:11.500px;color:#333">18 records</div>
  <div class="abs" style="left:607px;top:0;line-height:22px;font-size:11px;color:#555">Sum <span style="font-size:13px;color:#1d1f25;margin-left:2px">39</span></div>
 </div>
 <div class="abs" style="left:292px;top:724px;width:524px;height:8px;border-radius:4px;background:#c4c3c6"></div>
 <div class="abs" style="left:1572px;top:83px;width:8px;height:520px;border-radius:4px;background:#c9c8cb"></div>
</div>
</body></html>
